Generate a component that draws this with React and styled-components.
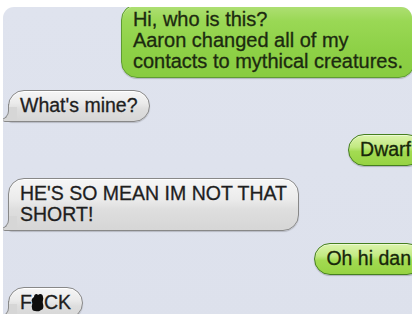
import React from 'react';
import styled, { createGlobalStyle, css } from 'styled-components';

const Global = createGlobalStyle`
  html, body { margin: 0; padding: 0; background: #ffffff; overflow: hidden; }
  body { font-family: "Liberation Sans", Arial, Helvetica, sans-serif; }
`;

const Photo = styled.div`
  margin: 7px 1px 0 3px;
  height: 320px;
  background: linear-gradient(180deg, #dfe3ee 0%, #dde1ec 100%);
  border-radius: 11px 11px 0 0;
  overflow: hidden;
  display: flex;
  flex-direction: column;
  gap: 12px;
`;

const Row = styled.div`
  display: flex;
  justify-content: ${(p) => (p.$sent ? 'flex-end' : 'flex-start')};
  padding-left: ${(p) => (p.$sent ? '0' : '5px')};
  margin-top: ${(p) => p.$top || 0}px;
  margin-right: ${(p) => p.$right || 0}px;
`;

const tones = {
  grey: css`
    color: #1e1e1e;
    background: linear-gradient(180deg, #f6f6f6 0%, #ebebeb 40%, #dedede 60%, #d6d6d6 100%);
    border: 1px solid #888888;
    box-shadow: inset 0 1px 0 #ffffff, 0 1px 1px rgba(0, 0, 0, 0.18);
    border-bottom-left-radius: 4px;
    &::before {
      content: '';
      position: absolute;
      left: -6px;
      bottom: -1px;
      width: 14px;
      height: 14px;
      background: #d6d6d6;
      border-bottom: 1px solid #888888;
      border-bottom-left-radius: 2px;
    }
    &::after {
      content: '';
      position: absolute;
      left: -13px;
      bottom: 1px;
      width: 12px;
      height: 15px;
      background: #dde1ec;
      border-right: 1px solid #888888;
      border-bottom: 1px solid #888888;
      border-bottom-right-radius: 9px;
    }
  `,
  green: css`
    color: #1c2a10;
    background: linear-gradient(180deg, #b0e076 0%, #9ad855 22%, #8ed147 60%, #88cc40 100%);
    border: 1px solid #5f9c32;
    box-shadow: inset 0 1px 0 rgba(255, 255, 255, 0.35), 0 1px 1px rgba(0, 0, 0, 0.2);
  `,
  lime: css`
    color: #17260a;
    background: linear-gradient(180deg, #dcf4ac 0%, #c2e982 40%, #a3db52 55%, #96d342 100%);
    border: 1px solid #457f1f;
    box-shadow: inset 0 1px 0 rgba(255, 255, 255, 0.5), 0 1px 1px rgba(0, 0, 0, 0.22);
  `,
};

const Bubble = styled.div`
  position: relative;
  font-size: ${(p) => p.$size || 19.5}px;
  line-height: 21px;
  padding: 4px 11px 5px;
  border-radius: 16px;
  white-space: nowrap;
  -webkit-text-stroke: 0.3px currentColor;
  ${(p) => tones[p.$tone]}
`;

const Censor = styled.svg`
  display: inline-block;
  width: 13px;
  height: 19px;
  vertical-align: -3px;
  margin: 0 0 0 -1px;
`;

export default function App() {
  return (
    <>
      <Global />
      <Photo>
        <Row $sent $top={-3} $right={-3}>
          <Bubble $tone="green" $size={20}>
            Hi, who is this?
            <br />
            Aaron changed all of my
            <br />
            contacts to mythical creatures.
          </Bubble>
        </Row>
        <Row>
          <Bubble $tone="grey">What's mine?</Bubble>
        </Row>
        <Row $sent $right={-11}>
          <Bubble $tone="lime">Dwarf</Bubble>
        </Row>
        <Row>
          <Bubble $tone="grey">
            HE'S SO MEAN IM NOT THAT
            <br />
            SHORT!
          </Bubble>
        </Row>
        <Row $sent $right={-11}>
          <Bubble $tone="lime">Oh hi dan</Bubble>
        </Row>
        <Row>
          <Bubble $tone="grey">
            F
            <Censor viewBox="0 0 13 19" aria-hidden="true">
              <path
                d="M3 4 C3 1 6 0 7 2 C9 0 12 1 12 4 C13 6 11 8 12 11 C13 14 12 17 10 17 C8 19 6 18 4 18 C2 18 1 17 1 15 C0 13 2 11 1 9 C0 7 1 5 3 4 Z"
                fill="#0d0d0d"
              />
            </Censor>
            CK
          </Bubble>
        </Row>
      </Photo>
    </>
  );
}
